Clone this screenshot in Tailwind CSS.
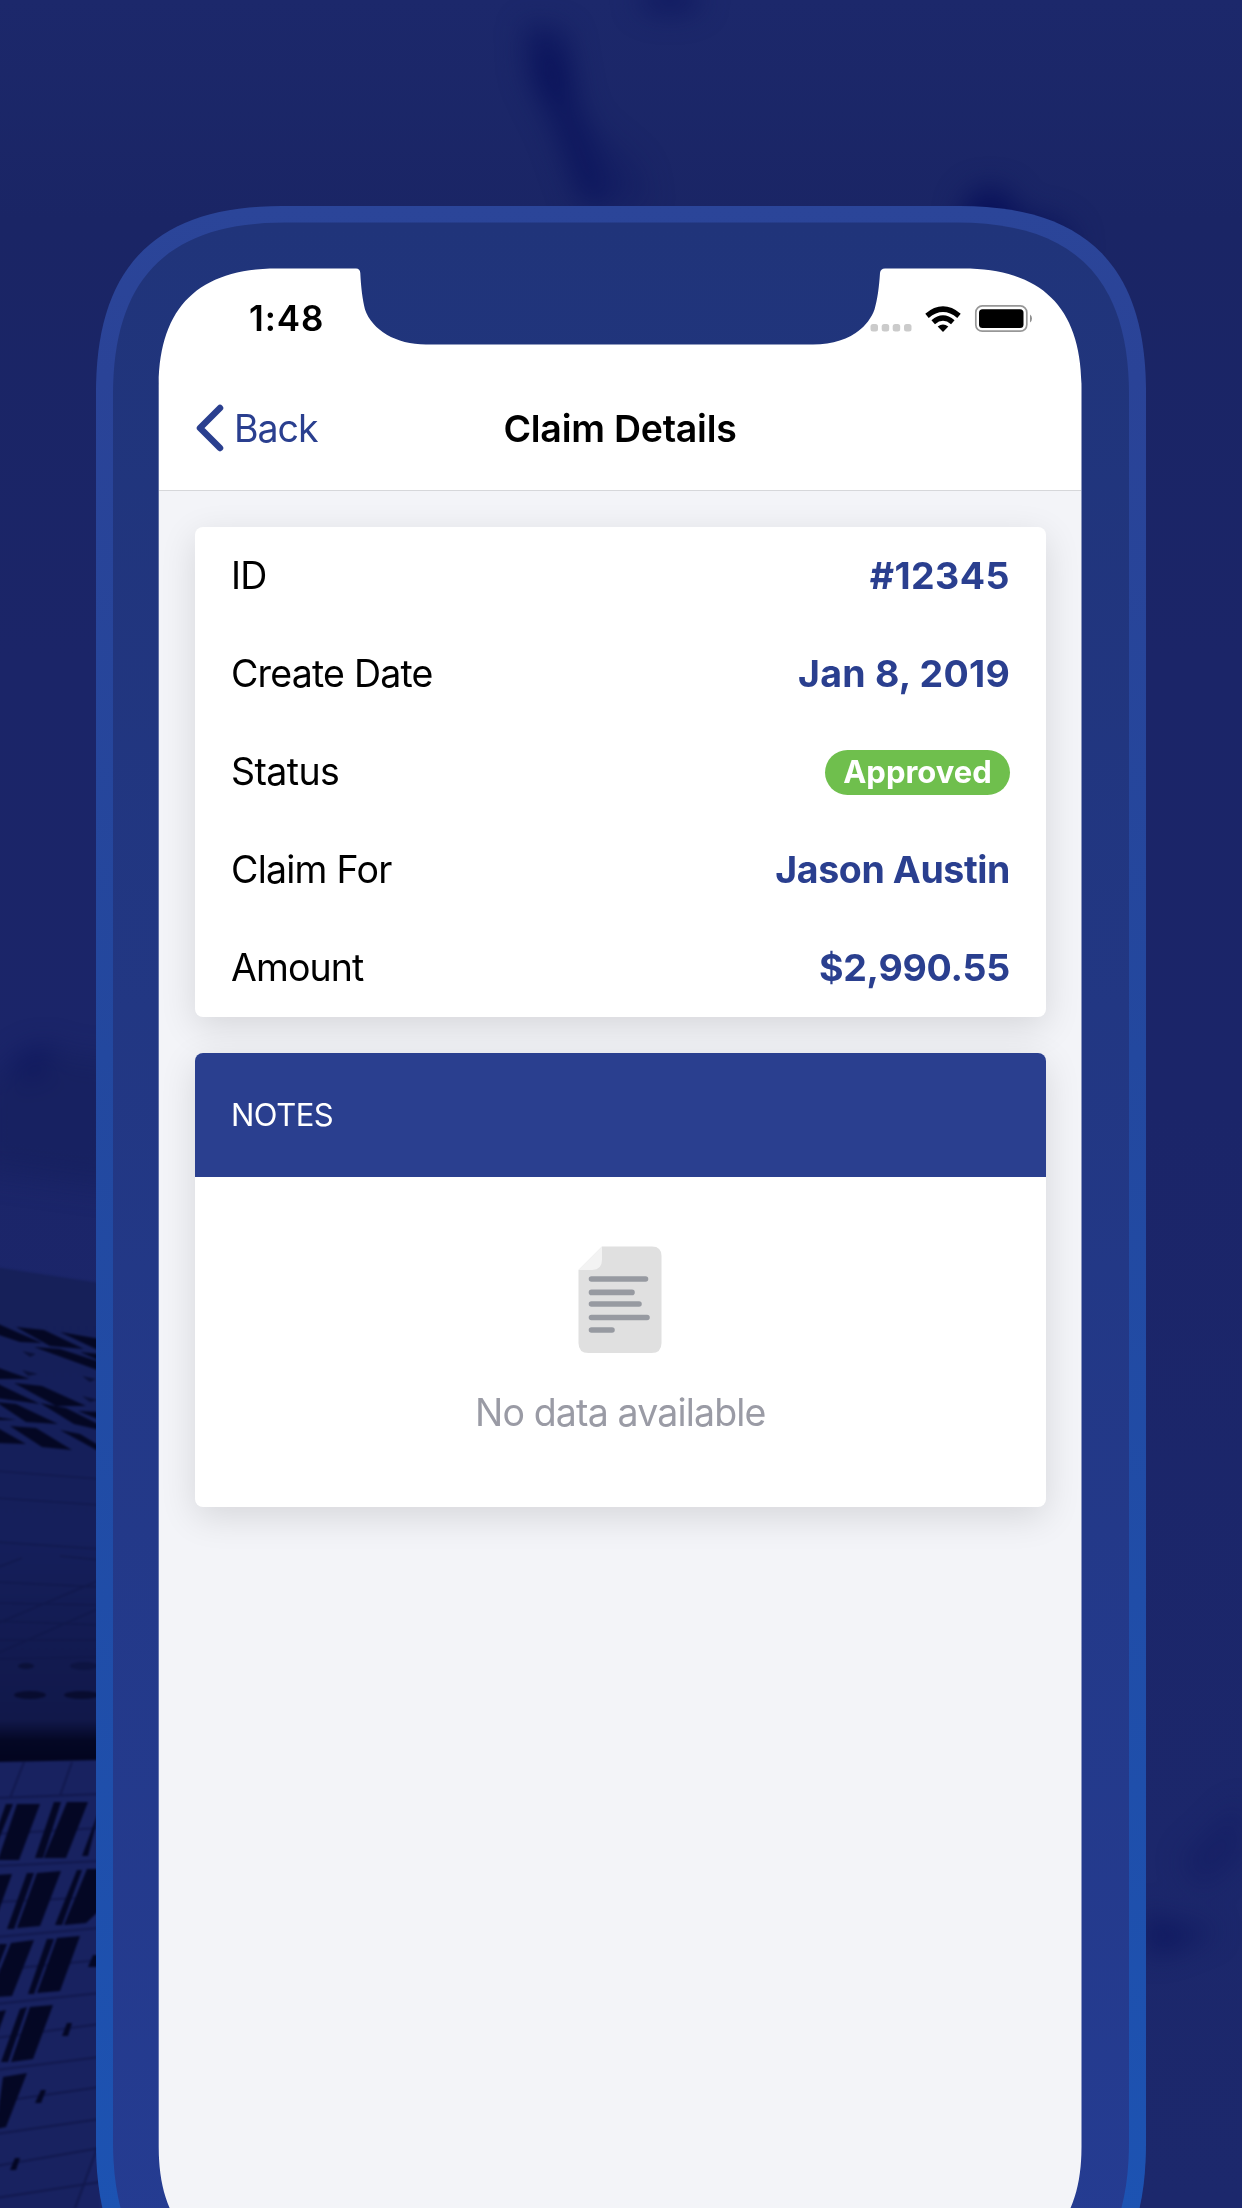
<!DOCTYPE html>
<html lang="en">
<head>
<meta charset="utf-8">
<title>Claim Details</title>
<script src="https://cdn.jsdelivr.net/npm/@tailwindcss/browser@4"></script>
</head>
<body class="bg-[#1a2568] font-['Inter',sans-serif]">
<div class="relative w-[1242px] h-[2208px] overflow-hidden">
  <svg class="absolute inset-0" width="1242" height="2208" viewBox="0 0 1242 2208">
    <defs>
      <linearGradient id="rim" x1="0" y1="0" x2="0" y2="1">
        <stop offset="0" stop-color="#2b4599"/><stop offset=".08" stop-color="#2a4397"/><stop offset=".4" stop-color="#23489f"/><stop offset="1" stop-color="#1c54b4"/>
      </linearGradient>
      <linearGradient id="bezel" x1="0" y1="0" x2="0" y2="1">
        <stop offset="0" stop-color="#20347a"/><stop offset="1" stop-color="#253c92"/>
      </linearGradient>
      <linearGradient id="sky" x1="0" y1="0" x2="0" y2="1">
        <stop offset="0" stop-color="#1c286b"/><stop offset=".1" stop-color="#1a2565"/><stop offset=".3" stop-color="#1b2568"/><stop offset=".5" stop-color="#1b2569"/><stop offset="1" stop-color="#1c286c"/>
      </linearGradient>
      <linearGradient id="tower" x1="0" y1="0" x2="0" y2="1">
        <stop offset="0" stop-color="#162059"/><stop offset=".6" stop-color="#151f5b"/><stop offset="1" stop-color="#11184a"/>
      </linearGradient>
      <linearGradient id="ledge" x1="0" y1="0" x2="0" y2="1">
        <stop offset="0" stop-color="#11184a"/><stop offset=".5" stop-color="#040724"/><stop offset="1" stop-color="#03051f"/>
      </linearGradient>
      <filter id="soft" x="-200%" y="-200%" width="500%" height="500%" color-interpolation-filters="sRGB"><feGaussianBlur stdDeviation="14"/></filter>
      <filter id="fine" color-interpolation-filters="sRGB"><feGaussianBlur stdDeviation=".9"/></filter>
      <clipPath id="screen"><path d="M158.700 387C158.700 308 198 268.500 277 268.500H356Q360 268.500 360.300 273C361 288 362.500 299 365 309.500C372 330 396 344.500 426 344.500H813C845 344.500 867 330 874.500 309.500C877.500 299 879 288 880 273Q880.500 268.500 885 268.500H963C1042 268.500 1081.500 308 1081.500 387V2147C1081.500 2226 1042 2265 963 2265H277C198 2265 158.700 2226 158.700 2147Z"/></clipPath>
    </defs>
    <rect width="1242" height="2208" fill="url(#sky)"/>
    <g filter="url(#soft)" fill="#09115a">
      <path d="M525 25L565 32 575 90 592 150 610 206 580 200 555 130 528 75Z" opacity=".7"/>
      <path d="M575 110L640 165 650 206 590 206Z" opacity=".25"/>
      <ellipse cx="555" cy="78" rx="12" ry="22" opacity=".7"/>
      <ellipse cx="670" cy="0" rx="32" ry="14" opacity=".6"/>
      <ellipse cx="990" cy="218" rx="28" ry="30"/>
      <ellipse cx="1030" cy="245" rx="45" ry="30" opacity=".8"/>
      <path d="M-20 1085L40 1050 120 1060V1190L-20 1170Z" fill="#111b55" opacity=".4"/>
      <path d="M5 1072L30 1052 55 1046 35 1072Z" opacity=".9"/>
      <path d="M1146 1910L1170 1925 1220 1930 1170 1950 1146 1955Z" opacity=".7"/>
      <path d="M1180 1860L1242 1800V1855L1200 1890Z" opacity=".3"/>
    </g>
    <g filter="url(#fine)">
      <path d="M-5 1267L100 1283V1720H-5Z" fill="url(#tower)"/>
      <g fill="#040723">
        <path d="M-4 1323L42 1343 20 1342-4 1334ZM16 1327L44 1330 84 1349 50 1346ZM60 1332L100 1339V1351ZM34 1347L60 1349 100 1362V1371ZM80 1352L100 1354V1361ZM-4 1367L30 1379-4 1379ZM-4 1383L40 1404-4 1398ZM14 1383L42 1386 86 1406 56 1406ZM-4 1402L16 1404 58 1424 26 1422ZM40 1403L66 1408 100 1425V1430L74 1424ZM78 1411L100 1412V1420ZM-4 1417L16 1420-4 1420ZM-4 1427L26 1444-4 1443ZM10 1426L36 1428 72 1450 42 1447ZM60 1430L80 1434 100 1446V1452Z"/>
        <path d="M22 1351L36 1354 30 1357ZM22 1370L38 1374 28 1376ZM82 1376L96 1379 90 1382ZM82 1396L98 1400 90 1402Z" opacity=".6"/>
        <ellipse cx="30" cy="1695" rx="16" ry="4" opacity=".7"/><ellipse cx="82" cy="1695" rx="18" ry="4" opacity=".7"/>
        <ellipse cx="26" cy="1666" rx="8" ry="3" opacity=".5"/><ellipse cx="84" cy="1666" rx="14" ry="4" opacity=".3"/>
      </g>
      <g stroke="#0f1749" stroke-width="1.500" fill="none" opacity=".7">
        <path d="M-4 1471L100 1479M-4 1498L100 1505M-4 1542L100 1549M-4 1582L100 1587M-4 1603L100 1605M-4 1621L100 1625M-4 1640L100 1640M-4 1659L100 1657M-4 1624L100 1580M-4 1654L100 1608M-4 1568L22 1558M60 1556L100 1560"/>
      </g>
      <rect x="-5" y="1720" width="106" height="42" fill="url(#ledge)"/>
      <path d="M-5 1762L100 1760V2215H-5Z" fill="#182260"/>
      <path d="M75 2215L100 2142V2215Z" fill="#192364"/>
      <g stroke="#10174a" stroke-width="2" fill="none">
        <path d="M-4 1798L100 1794M-4 1866L100 1861M-4 1937L100 1928M-4 2004L100 1993M-4 2070L100 2057M-4 2134L100 2119M-4 2198L100 2182M10 1798L24 1762M60 1796L72 1762M-4 1834L100 1828M-4 1902L100 1897M-4 1970L100 1960M-4 2038L100 2024M-4 2102L100 2087M-4 2166L100 2148M75 2208L98 2146" opacity=".8"/>
      </g>
      <g fill="#040724">
        <path d="M17 1804H40L19 1860H-2ZM6 1804H13L-4 1846V1832ZM67 1802H88L66 1858H44ZM54 1802H61L43 1858H35ZM100 1808L88 1856H82ZM-4 1875L12 1874-4 1918ZM37 1873L61 1871 40 1926 17 1928ZM27 1873H34L14 1929H7ZM87 1869H100V1910L86 1923 64 1925ZM77 1870H82L62 1925H55ZM11 1943L34 1940 12 1996-4 1997V1980ZM-1 1944H7L-4 1972ZM57 1938L80 1936 60 1991 37 1993ZM47 1939H54L34 1994H28ZM93 1955L98 1955V1967H88ZM30 2007L53 2005 33 2059 11 2062ZM20 2009L27 2007 8 2062H1ZM-4 2012L6 2010-4 2038ZM67 2023H72L68 2036H62ZM3 2077L27 2073 6 2127-4 2129ZM41 2090H46L41 2103H35ZM15 2158H20L16 2170H10Z"/>
      </g>
    </g>
    <path d="M96 392C96 266 156 206 282 206H960C1086 206 1146 266 1146 392V2144C1146 2270 1086 2330 960 2330H282C156 2330 96 2270 96 2144Z" fill="url(#rim)"/>
    <path d="M113 394.500C113 278 168.500 222.500 285 222.500H957C1073.500 222.500 1129 278 1129 394.500V2142C1129 2258.500 1073.500 2314 957 2314H285C168.500 2314 113 2258.500 113 2142Z" fill="url(#bezel)"/>
    <g clip-path="url(#screen)">
      <rect x="150" y="260" width="940" height="230" fill="#fff"/>
      <rect x="150" y="490" width="940" height="1780" fill="#f3f4f8"/>
    </g>
  </svg>

  <main class="relative ml-[159px] w-[922px] pt-[268px]">
    <div class="flex h-[102px] items-center justify-between pl-[90px] pr-[49px]">
      <span class="mb-[2px] text-[35px] font-semibold leading-[40px] tracking-[0.9px]">1:48</span>
      <svg class="mt-[1px]" width="168" height="30" viewBox="0 0 168 30">
        <g fill="#cbcbcb"><rect x="6.500" y="19" width="7.500" height="7.500" rx="2.500"/><rect x="17.700" y="19" width="7.500" height="7.500" rx="2.500"/><rect x="28.700" y="19" width="7.500" height="7.500" rx="2.500"/><rect x="40" y="19" width="7.500" height="7.500" rx="2.500"/></g>
        <path d="M79 27L73.700 21.500Q79 17.300 84.300 21.500Z"/>
        <path d="M69.200 17.200Q79 8.800 88.800 17.200M63 10.800Q79-2.500 95 10.800" fill="none" stroke="#000" stroke-width="5.400"/>
        <rect x="111.800" y=".9" width="51" height="25.300" rx="6.500" fill="none" stroke="#979797" stroke-width="1.700"/>
        <rect x="115" y="4.300" width="44.500" height="18.600" rx="3.500"/>
        <path d="M166 9.500Q168 11 168 13.500Q168 16 166 17.500Z" fill="#8f8f8f"/>
      </svg>
    </div>
    <header class="flex h-[121px] items-center border-b border-[#d6d7da] px-[36px] pb-[2px]">
      <div class="flex flex-1 items-center gap-[9px] text-[#2a3f8f]">
        <svg class="mb-[2px]" width="30" height="48" viewBox="0 0 30 48" fill="none" stroke="currentColor" stroke-width="6.500" stroke-linecap="round" stroke-linejoin="round"><path d="M25 4L5 24 25 44"/></svg>
        <span class="text-[37.500px] tracking-[-1px]">Back</span>
      </div>
      <h1 class="text-[37.500px] font-semibold tracking-[-0.25px]">Claim Details</h1>
      <div class="flex-1"></div>
    </header>

    <div class="flex flex-col gap-[36px] pl-[36px] pr-[35.500px] pt-[36px]">
      <section class="rounded-lg bg-white pl-[36px] pr-[35.500px] text-[37.500px] shadow-[0_10px_36px_rgba(0,0,0,0.12)]">
        <div class="flex h-[98px] items-center justify-between"><span class="tracking-[-0.8px]">ID</span><b class="font-bold tracking-[0.45px] text-[#2a3f8f]">#12345</b></div>
        <div class="flex h-[98px] items-center justify-between"><span class="tracking-[-0.8px]">Create Date</span><b class="font-bold tracking-[0.25px] text-[#2a3f8f]">Jan 8, 2019</b></div>
        <div class="flex h-[98px] items-center justify-between"><span class="tracking-[-0.6px]">Status</span><b class="flex h-[45px] w-[185px] items-center justify-center rounded-full bg-[#6fbf4d] text-[31px] font-bold text-white">Approved</b></div>
        <div class="flex h-[98px] items-center justify-between"><span class="tracking-[-0.75px]">Claim For</span><b class="font-bold tracking-[-0.4px] text-[#2a3f8f]">Jason Austin</b></div>
        <div class="flex h-[98px] items-center justify-between"><span class="tracking-[-0.9px]">Amount</span><b class="font-bold tracking-[-0.25px] text-[#2a3f8f]">$2,990.55</b></div>
      </section>
      <section class="h-[454px] rounded-lg bg-white shadow-[0_10px_36px_rgba(0,0,0,0.12)]">
        <h2 class="flex h-[124px] items-center rounded-t-lg bg-[#2a3f8f] px-[36px] text-[31px] tracking-[-0.5px] text-white">NOTES</h2>
        <div class="flex flex-col items-center pt-[69px]">
          <svg width="84" height="108" viewBox="0 0 84 108">
            <path d="M24 .5H74Q83.500 .5 83.500 10V97Q83.500 107 73.500 107H10.500Q.5 107 .5 97V24Z" fill="#e0e0e0"/>
            <path d="M24 .5V13.500Q24 24 14 24H.5Z" fill="#f3f3f3"/>
            <path d="M13.500 33H67.500M13.500 46.400H54M13.500 58H61M13.500 71.500H69M13.500 84H34" stroke="#979aa1" stroke-width="5.600" stroke-linecap="round"/>
          </svg>
          <p class="mt-[31px] text-[37.500px] tracking-[-0.85px] text-[#9a9ba5]">No data available</p>
        </div>
      </section>
    </div>
  </main>
</div>
</body>
</html>
